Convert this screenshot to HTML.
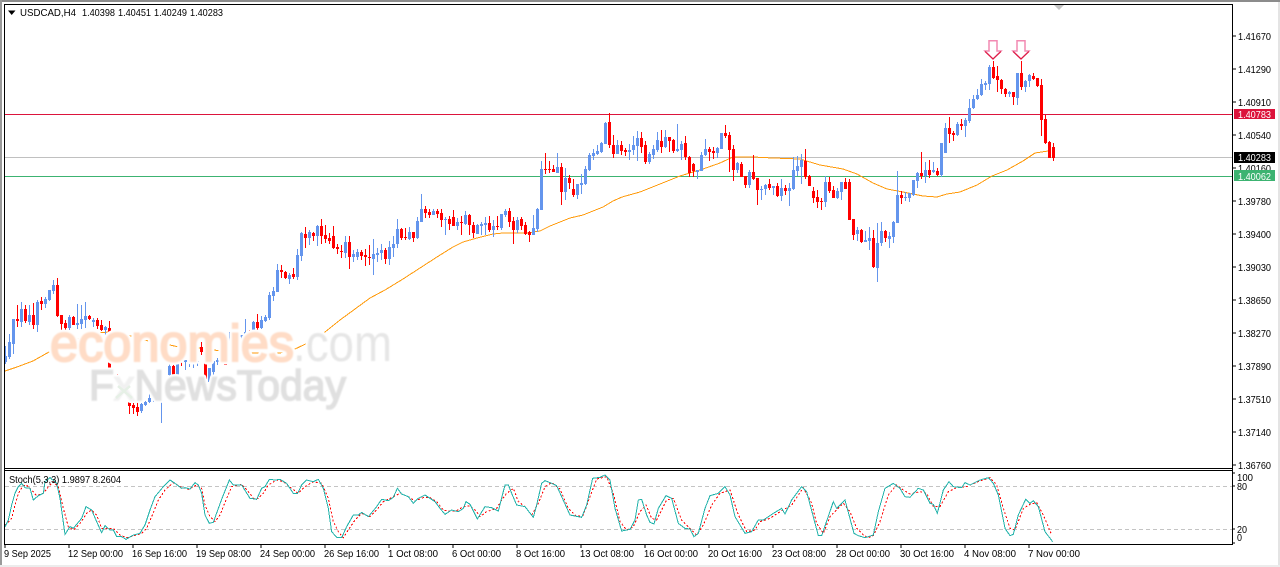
<!DOCTYPE html>
<html><head><meta charset="utf-8"><style>
html,body{margin:0;padding:0;background:#fff;width:1280px;height:567px;overflow:hidden}
svg{display:block;position:absolute;left:0;top:0}
text{font-family:"Liberation Sans",sans-serif;font-size:10px;fill:#000}
.p{font-size:10.5px}
.w{font-size:10.5px;fill:#fff}
.e{font-size:52px}
.f{font-size:43px}
</style></head><body>
<svg id="s" width="1280" height="567" viewBox="0 0 1280 567" xmlns="http://www.w3.org/2000/svg">
<rect width="1280" height="567" fill="#fff"/>
<defs><filter id="bl" x="-5%" y="-20%" width="110%" height="140%"><feGaussianBlur stdDeviation="0.8"/></filter></defs>
<g shape-rendering="crispEdges">
<rect x="0" y="0" width="1280" height="2" fill="#8c8c8c"/>
<rect x="0" y="0" width="2" height="565" fill="#9a9a9a"/>
<rect x="1278" y="2" width="2" height="563" fill="#e4e4e4"/>
<rect x="0" y="565" width="1280" height="2" fill="#ececec"/>
<rect x="5" y="114" width="1227" height="1" fill="#dc143c"/>
<rect x="5" y="157" width="1227" height="1" fill="#c0c0c0"/>
<rect x="5" y="176" width="1227" height="1" fill="#3cb371"/>
</g>
<polygon points="1054,5 1064,5 1059,10" fill="#c4c4c4"/>
<polyline fill="none" stroke="#ff9a0a" stroke-width="1" shape-rendering="crispEdges" points="5,371 17,367 33,361 49,352 60,346 78,339 97,333 110,332 123,334 135,337 152,342 170,345 183,348 203,348 220,351 240,353 280,353 295,349 312,341 325,332 340,320 355,309 370,298 385,290 403,279 420,268 437,257 453,247 463,242 477,238 493,234 503,233 527,233 540,231 550,226 570,218 583,215 603,207 613,201 622,197 640,192 660,184 680,176 703,169 720,163 733,157 753,157 773,158 800,159 820,165 843,169 857,174 873,183 887,189 903,192 923,196 937,197 947,194 960,192 977,185 992,176 1007,170 1023,161 1035,153 1048,151"/>
<g id="candles" shape-rendering="crispEdges"></g>
<g style="fill:#fff;stroke:#fff;stroke-linejoin:round">
<text x="50" y="361" textLength="244" lengthAdjust="spacingAndGlyphs" class="e" style="fill:#fff;stroke:#fff;stroke-width:7px">economies</text>
<text x="293" y="361" textLength="99" lengthAdjust="spacingAndGlyphs" class="e" style="fill:#fff;stroke:#fff;stroke-width:5px">.com</text>
<text x="89" y="400" textLength="257" lengthAdjust="spacingAndGlyphs" class="f" style="fill:#fff;stroke:#fff;stroke-width:6px">FxNewsToday</text>
</g>
<g filter="url(#bl)">
<text x="50" y="361" textLength="244" lengthAdjust="spacingAndGlyphs" class="e" style="fill:#ffdcc6;stroke:#ffdcc6;stroke-width:2px">economies</text>
<text x="293" y="361" textLength="99" lengthAdjust="spacingAndGlyphs" class="e" style="fill:#e6e6e6">.com</text>
<text x="89" y="400" textLength="257" lengthAdjust="spacingAndGlyphs" class="f" style="fill:#e0e0e0;stroke:#e0e0e0;stroke-width:1.6px">F<tspan style="fill:#f1f1f1;stroke:#f1f1f1">x</tspan>NewsToday</text>
</g>
<path d="M118 386l14 12M130 386l-14 12" stroke="#e6f0e6" stroke-width="2.5" fill="none"/>
<g fill="#fff" stroke="#f28ab2" stroke-width="1.5">
<path d="M989 40.8H997V51H1001L993 59L985 51H989Z"/>
<path d="M1017 40.8H1025V51H1029L1021 59L1013 51H1017Z"/>
</g>
<g fill="none" stroke="#dc143c" stroke-width="1.1">
<path d="M985 51.5L993 59L1001 51.5M1013 51.5L1021 59L1029 51.5"/>
</g>
<g shape-rendering="crispEdges">
<path d="M5 486.5H1232M5 529.5H1232" stroke="#c4c4c4" stroke-width="1" stroke-dasharray="4 3" fill="none"/>
</g>
<g fill="none" stroke-width="1">
<g transform="translate(0,465) scale(.33333)" shape-rendering="crispEdges">
<polyline vector-effect="non-scaling-stroke" stroke="#ff0000" stroke-dasharray="2 2" points="15,180 25,172 35,160 45,120 55,85 70,62 80,60 95,75 110,92 130,85 145,65 160,50 175,65 190,130 205,185 220,195 240,175 260,145 275,135 290,150 305,190 320,190 340,190 360,210 380,218 400,213 425,205 440,190 455,155 475,105 495,75 520,53 540,65 565,73 590,60 605,70 615,120 630,155 645,170 660,150 680,100 695,65 725,58 745,80 760,100 775,100 790,85 805,60 830,45 850,50 875,70 895,85 915,65 940,50 965,55 985,100 1000,170 1015,200 1030,218 1045,195 1065,165 1085,145 1110,155 1130,135 1150,110 1180,95 1200,85 1225,95 1245,108 1270,98 1290,98 1310,110 1330,135 1345,138 1370,137 1390,125 1410,122 1430,140 1440,155 1460,140 1490,130 1505,105 1520,85 1540,70 1555,110 1575,125 1595,150 1615,115 1635,65 1655,53 1680,72 1705,130 1730,155 1750,150 1770,95 1790,42 1820,35 1840,85 1860,170 1880,195 1900,185 1920,140 1938,120 1955,160 1970,165 2000,105 2020,100 2045,165 2065,185 2090,210 2110,180 2135,120 2160,85 2190,75 2215,150 2240,200 2265,195 2280,170 2310,160 2340,140 2375,120 2410,68 2435,115 2450,175 2470,205 2490,155 2530,115 2550,140 2570,190 2590,210 2605,218 2620,212 2640,170 2665,90 2690,60 2710,75 2730,87 2760,80 2780,85 2800,125 2820,125 2845,80 2870,68 2900,65 2935,50 2970,38 2990,60 3010,130 3030,190 3045,195 3070,130 3090,118 3110,113 3130,150 3155,210"/>
<polyline vector-effect="non-scaling-stroke" stroke="#20b2aa" points="15,185 25,165 35,120 45,85 55,65 65,55 75,68 90,70 100,105 115,92 130,85 135,50 150,38 170,55 180,100 195,208 210,185 220,190 245,160 258,125 275,135 290,170 305,203 315,182 330,195 340,195 350,215 365,215 378,223 400,210 420,205 435,180 450,135 465,95 490,65 510,45 525,55 545,70 555,68 570,72 585,53 595,60 605,85 615,150 628,175 640,172 655,130 668,95 688,45 700,60 725,60 750,100 770,103 785,70 795,65 808,43 825,45 840,43 860,55 880,85 893,85 905,60 920,45 940,50 955,43 970,70 985,130 995,200 1010,217 1025,218 1040,185 1060,150 1075,150 1085,142 1105,155 1130,125 1145,103 1165,107 1180,97 1192,70 1205,87 1225,95 1240,115 1255,100 1275,90 1290,100 1305,110 1320,130 1335,148 1355,135 1375,140 1390,130 1398,110 1410,118 1432,162 1455,125 1475,128 1495,138 1515,60 1525,60 1535,85 1550,120 1575,125 1600,157 1610,120 1625,55 1635,47 1655,55 1670,62 1710,150 1735,155 1745,157 1760,120 1778,40 1800,37 1815,30 1830,45 1845,130 1865,198 1890,193 1905,165 1915,105 1925,103 1940,150 1950,172 1962,177 1975,130 1998,92 2015,100 2035,175 2055,190 2070,192 2082,215 2095,205 2115,130 2130,92 2155,85 2175,65 2190,90 2205,155 2235,205 2255,200 2275,165 2290,165 2320,145 2345,130 2355,147 2375,105 2405,65 2420,80 2455,212 2465,212 2500,110 2510,130 2535,105 2562,205 2575,212 2595,218 2620,210 2635,140 2655,70 2680,55 2700,70 2715,95 2730,97 2755,70 2770,75 2790,115 2800,118 2812,145 2830,75 2847,50 2860,65 2885,68 2895,53 2910,60 2940,45 2965,38 2980,55 2995,90 3015,190 3030,212 3040,208 3055,150 3077,103 3090,115 3100,107 3115,125 3135,200 3158,230"/>
</g>
</g>
<g shape-rendering="crispEdges" fill="#000">
<rect x="4" y="4" width="1229" height="1"/>
<rect x="4" y="4" width="1" height="541"/>
<rect x="1232" y="4" width="1" height="541"/>
<rect x="4" y="468" width="1229" height="1"/>
<rect x="4" y="470" width="1229" height="1"/>
<rect x="4" y="544" width="1229" height="1"/>
<path d="M1232 36h4M1232 69h4M1232 102h4M1232 135h4M1232 168h4M1232 201h4M1232 234h4M1232 267h4M1232 300h4M1232 333h4M1232 366h4M1232 399h4M1232 432h4M1232 465h4M1232 473h3M1232 486h3M1232 529h3M1232 543h3M5 544v4M69 544v4M133 544v4M197 544v4M261 544v4M325 544v4M389 544v4M453 544v4M517 544v4M581 544v4M645 544v4M709 544v4M773 544v4M837 544v4M901 544v4M965 544v4M1029 544v4" stroke="#000" fill="none"/>
<rect x="1234" y="109" width="41" height="10" fill="#dc143c"/>
<rect x="1234" y="152" width="41" height="11" fill="#000"/>
</g>
<polygon points="8,10.5 15.5,10.5 11.7,15" fill="#000"/>
<text x="20" y="16" textLength="56" lengthAdjust="spacingAndGlyphs" class="p">USDCAD,H4</text>
<text x="82" y="16" textLength="33" lengthAdjust="spacingAndGlyphs" class="p">1.40398</text>
<text x="118" y="16" textLength="33" lengthAdjust="spacingAndGlyphs" class="p">1.40451</text>
<text x="154" y="16" textLength="33" lengthAdjust="spacingAndGlyphs" class="p">1.40249</text>
<text x="190" y="16" textLength="33" lengthAdjust="spacingAndGlyphs" class="p">1.40283</text>
<text x="1238" y="40" textLength="33" lengthAdjust="spacingAndGlyphs" class="p">1.41670</text>
<text x="1238" y="73" textLength="33" lengthAdjust="spacingAndGlyphs" class="p">1.41290</text>
<text x="1238" y="106" textLength="33" lengthAdjust="spacingAndGlyphs" class="p">1.40910</text>
<text x="1238" y="139" textLength="33" lengthAdjust="spacingAndGlyphs" class="p">1.40540</text>
<text x="1238" y="172" textLength="33" lengthAdjust="spacingAndGlyphs" class="p">1.40160</text>
<text x="1238" y="205" textLength="33" lengthAdjust="spacingAndGlyphs" class="p">1.39780</text>
<text x="1238" y="238" textLength="33" lengthAdjust="spacingAndGlyphs" class="p">1.39400</text>
<text x="1238" y="271" textLength="33" lengthAdjust="spacingAndGlyphs" class="p">1.39030</text>
<text x="1238" y="304" textLength="33" lengthAdjust="spacingAndGlyphs" class="p">1.38650</text>
<text x="1238" y="337" textLength="33" lengthAdjust="spacingAndGlyphs" class="p">1.38270</text>
<text x="1238" y="370" textLength="33" lengthAdjust="spacingAndGlyphs" class="p">1.37890</text>
<text x="1238" y="403" textLength="33" lengthAdjust="spacingAndGlyphs" class="p">1.37510</text>
<text x="1238" y="436" textLength="33" lengthAdjust="spacingAndGlyphs" class="p">1.37140</text>
<text x="1238" y="469" textLength="33" lengthAdjust="spacingAndGlyphs" class="p">1.36760</text>
<g shape-rendering="crispEdges"><rect x="1234" y="170" width="41" height="11" fill="#3cb371"/></g>
<text x="1238" y="118" textLength="33" lengthAdjust="spacingAndGlyphs" class="w">1.40783</text>
<text x="1238" y="161" textLength="33" lengthAdjust="spacingAndGlyphs" class="w">1.40283</text>
<text x="1238" y="180" textLength="33" lengthAdjust="spacingAndGlyphs" class="w">1.40062</text>
<text x="9" y="483" textLength="112" lengthAdjust="spacingAndGlyphs" class="p">Stoch(5,3,3) 1.9897 8.2604</text>
<text x="1237" y="481" textLength="16" lengthAdjust="spacingAndGlyphs" class="p">100</text>
<text x="1237" y="490" textLength="10" lengthAdjust="spacingAndGlyphs" class="p">80</text>
<text x="1237" y="533" textLength="10" lengthAdjust="spacingAndGlyphs" class="p">20</text>
<text x="1237" y="541" textLength="5" lengthAdjust="spacingAndGlyphs" class="p">0</text>
<text x="4" y="557" textLength="47" lengthAdjust="spacingAndGlyphs" class="p">9 Sep 2025</text>
<text x="68" y="557" textLength="55" lengthAdjust="spacingAndGlyphs" class="p">12 Sep 00:00</text>
<text x="132" y="557" textLength="55" lengthAdjust="spacingAndGlyphs" class="p">16 Sep 16:00</text>
<text x="196" y="557" textLength="55" lengthAdjust="spacingAndGlyphs" class="p">19 Sep 08:00</text>
<text x="260" y="557" textLength="55" lengthAdjust="spacingAndGlyphs" class="p">24 Sep 00:00</text>
<text x="324" y="557" textLength="55" lengthAdjust="spacingAndGlyphs" class="p">26 Sep 16:00</text>
<text x="388" y="557" textLength="50" lengthAdjust="spacingAndGlyphs" class="p">1 Oct 08:00</text>
<text x="452" y="557" textLength="49" lengthAdjust="spacingAndGlyphs" class="p">6 Oct 00:00</text>
<text x="516" y="557" textLength="49" lengthAdjust="spacingAndGlyphs" class="p">8 Oct 16:00</text>
<text x="580" y="557" textLength="54" lengthAdjust="spacingAndGlyphs" class="p">13 Oct 08:00</text>
<text x="644" y="557" textLength="54" lengthAdjust="spacingAndGlyphs" class="p">16 Oct 00:00</text>
<text x="708" y="557" textLength="54" lengthAdjust="spacingAndGlyphs" class="p">20 Oct 16:00</text>
<text x="772" y="557" textLength="54" lengthAdjust="spacingAndGlyphs" class="p">23 Oct 08:00</text>
<text x="836" y="557" textLength="54" lengthAdjust="spacingAndGlyphs" class="p">28 Oct 00:00</text>
<text x="900" y="557" textLength="54" lengthAdjust="spacingAndGlyphs" class="p">30 Oct 16:00</text>
<text x="964" y="557" textLength="52" lengthAdjust="spacingAndGlyphs" class="p">4 Nov 08:00</text>
<text x="1028" y="557" textLength="52" lengthAdjust="spacingAndGlyphs" class="p">7 Nov 00:00</text>
</svg>
<script>
var d=[[5,346,364,356,362],[9,334,359,342,357],[13,319,354,319,344],[17,305,327,319,321,1],[21,302,327,309,322],[25,305,323,309,321,1],[29,305,325,315,322],[33,303,329,315,325,1],[37,300,332,302,325],[41,297,310,301,304,1],[45,297,308,299,304],[49,290,301,290,300],[53,280,294,285,291],[57,278,317,285,316,1],[61,315,334,315,324,1],[65,320,333,323,328,1],[69,315,330,317,328],[73,316,325,317,325,1],[77,304,329,323,325],[81,305,329,319,324],[85,302,328,316,320],[89,315,320,316,319,1],[93,318,327,320,322],[97,318,329,320,326,1],[101,320,331,325,330,1],[105,326,339,327,330],[109,321,370,328,368,1],[113,372,374,372,374,1],[117,374,382,375,380,1],[121,381,390,381,384,1],[125,384,392,384,386,1],[129,394,414,394,406,1],[133,399,414,405,408,1],[137,397,416,407,412,1],[141,403,413,404,411],[145,401,406,402,405],[149,393,403,398,402],[153,391,402,393,399],[157,389,400,390,396],[161,369,423,378,392],[169,362,383,366,375],[173,362,378,366,377,1],[177,361,383,361,375],[181,349,366,361,362,1],[185,360,370,360,362],[189,355,367,356,359],[193,361,368,361,362],[197,361,366,361,362],[201,342,355,347,352,1],[205,348,383,351,379,1],[209,368,386,368,382],[213,361,376,361,372],[217,358,365,360,362],[221,347,363,350,361],[225,361,365,361,365,1],[229,332,350,344,347],[233,338,352,340,342],[237,336,350,338,340],[241,335,345,335,337],[245,319,337,332,336],[249,330,336,332,334,1],[253,321,334,322,334],[257,314,330,322,328,1],[261,316,329,320,328],[265,315,322,317,321],[269,292,320,295,318],[273,287,301,291,296],[277,264,292,270,292],[281,265,278,270,272,1],[285,271,279,272,278,1],[289,273,284,275,279],[293,268,279,274,277,1],[297,249,280,255,277],[301,232,261,233,256],[305,227,248,234,238,1],[309,230,245,232,238],[313,232,241,233,236,1],[317,225,246,226,236],[321,219,244,226,236,1],[325,225,243,235,239,1],[329,233,244,238,241,1],[333,226,249,236,248,1],[337,244,254,247,249,1],[341,245,258,251,252,1],[345,236,258,242,253],[349,236,269,242,257,1],[353,250,262,254,257],[357,249,260,252,257],[361,250,260,252,256,1],[365,249,266,255,257,1],[369,245,265,257,258,1],[373,239,275,254,259],[377,248,262,253,255],[381,244,260,250,253],[385,248,264,250,259,1],[389,241,265,247,259],[393,236,257,244,248],[397,219,248,229,244],[401,228,240,229,238,1],[405,228,240,237,238,1],[409,227,240,232,239],[413,232,242,232,238,1],[417,217,239,221,238],[421,194,222,209,222],[425,206,218,209,213,1],[429,209,218,212,215,1],[433,209,215,211,215],[437,209,218,211,214,1],[441,209,227,213,220,1],[445,217,235,219,220],[449,216,230,219,224,1],[453,210,226,217,226,1],[457,218,230,222,226],[461,216,235,222,223,1],[465,211,225,215,224],[469,214,235,215,225,1],[473,222,238,225,233,1],[477,224,234,225,234],[481,222,235,224,226],[485,217,235,223,225],[489,216,232,223,230,1],[493,220,237,226,230],[497,216,230,226,227,1],[501,214,230,214,228],[505,209,217,211,215],[509,208,227,211,222,1],[513,217,244,221,230,1],[517,217,233,220,230],[521,217,230,219,226,1],[525,222,235,225,234,1],[529,231,242,232,235,1],[533,215,235,228,235],[537,208,232,209,229],[541,161,210,169,210],[545,153,174,169,170,1],[549,161,173,169,170,1],[553,165,172,169,172,1],[557,153,173,167,173],[561,163,205,167,192,1],[565,168,200,178,192],[569,175,189,178,183,1],[573,179,197,189,195,1],[577,184,199,184,195],[581,174,194,183,185],[585,166,185,169,184],[589,153,171,155,170],[593,149,160,153,156],[597,145,155,151,154],[601,142,153,143,152],[605,122,144,123,144],[609,113,148,122,145,1],[613,135,158,145,154,1],[617,140,154,145,154],[621,141,155,145,151,1],[625,148,156,150,152,1],[629,144,160,150,152],[633,136,155,145,150],[637,131,161,138,146],[641,132,153,138,147,1],[645,141,164,145,162,1],[649,152,164,154,162],[653,145,159,149,155],[657,132,152,140,150],[661,130,153,141,147,1],[665,130,148,137,147],[669,137,152,137,141,1],[673,139,153,140,151,1],[677,124,152,149,151],[681,141,160,144,150],[685,136,160,143,157,1],[689,156,177,157,173,1],[693,163,177,164,171,1],[697,170,179,170,172],[701,152,171,155,171],[705,139,156,149,155],[709,147,161,149,152,1],[713,147,159,151,153,1],[717,147,158,148,153],[721,133,149,133,149],[725,125,138,133,136,1],[729,132,172,135,150,1],[733,145,181,149,170,1],[737,162,173,163,170],[741,162,177,164,177,1],[745,176,188,176,185,1],[749,170,188,172,185],[753,155,180,172,179,1],[757,178,205,178,190,1],[761,186,200,189,190],[765,184,195,185,189],[769,179,190,184,188,1],[773,186,195,186,188],[777,183,197,186,196,1],[781,179,201,188,196],[785,185,195,188,191,1],[789,183,206,188,191],[793,157,190,170,189],[797,156,176,166,171],[801,154,184,160,167],[805,149,179,161,177,1],[809,175,186,176,186,1],[813,187,203,191,198,1],[817,190,208,197,202,1],[821,198,210,201,202,1],[825,176,207,182,202],[829,177,193,182,191,1],[833,186,198,190,198,1],[837,188,199,191,198],[841,182,200,182,192],[845,178,189,182,189,1],[849,179,220,182,220,1],[853,219,240,219,235,1],[857,227,241,230,234],[861,229,243,230,242,1],[865,231,242,240,242],[869,227,250,238,241],[873,230,268,238,267,1],[877,223,282,243,268],[881,222,246,231,243],[885,230,242,231,238,1],[889,232,248,236,239],[893,221,243,222,237],[897,171,223,195,223],[901,191,204,195,198,1],[905,192,201,197,198],[909,193,202,193,198],[913,180,196,180,195],[917,172,188,173,181],[921,152,179,173,176,1],[925,162,183,170,176],[929,160,178,170,175,1],[933,162,173,170,172],[937,168,176,171,175,1],[941,143,177,143,175],[945,123,153,128,153],[949,117,143,128,134,1],[953,131,141,133,135,1],[957,122,136,124,135],[961,119,130,124,126,1],[965,118,137,120,126],[969,99,123,108,121],[973,95,109,99,108],[977,89,100,95,99],[981,79,96,84,95],[985,81,90,83,85],[989,65,90,67,84],[993,61,79,67,78,1],[997,66,92,76,80,1],[1001,79,94,80,89,1],[1005,88,97,89,94,1],[1009,91,97,92,94],[1013,92,105,92,97,1],[1017,73,105,73,98],[1021,61,90,73,87,1],[1025,80,92,81,87],[1029,74,87,75,81],[1033,73,80,76,79,1],[1037,78,87,78,86,1],[1041,79,136,85,120,1],[1045,115,144,119,143,1],[1049,141,158,142,158,1],[1053,143,161,147,158,1]];
var n='http://www.w3.org/2000/svg',g=document.getElementById('candles');
function r(x,y,w,h,f){var e=document.createElementNS(n,'rect');e.setAttribute('x',x);e.setAttribute('y',y);e.setAttribute('width',w);e.setAttribute('height',h);e.setAttribute('fill',f);g.appendChild(e);}
d.forEach(function(c){var f=c[5]?'#ff0000':'#6495ed';r(c[0],c[1],1,c[2]-c[1],f);r(c[0]-1,c[3],3,c[4]-c[3],f);});
</script>
</body></html>
